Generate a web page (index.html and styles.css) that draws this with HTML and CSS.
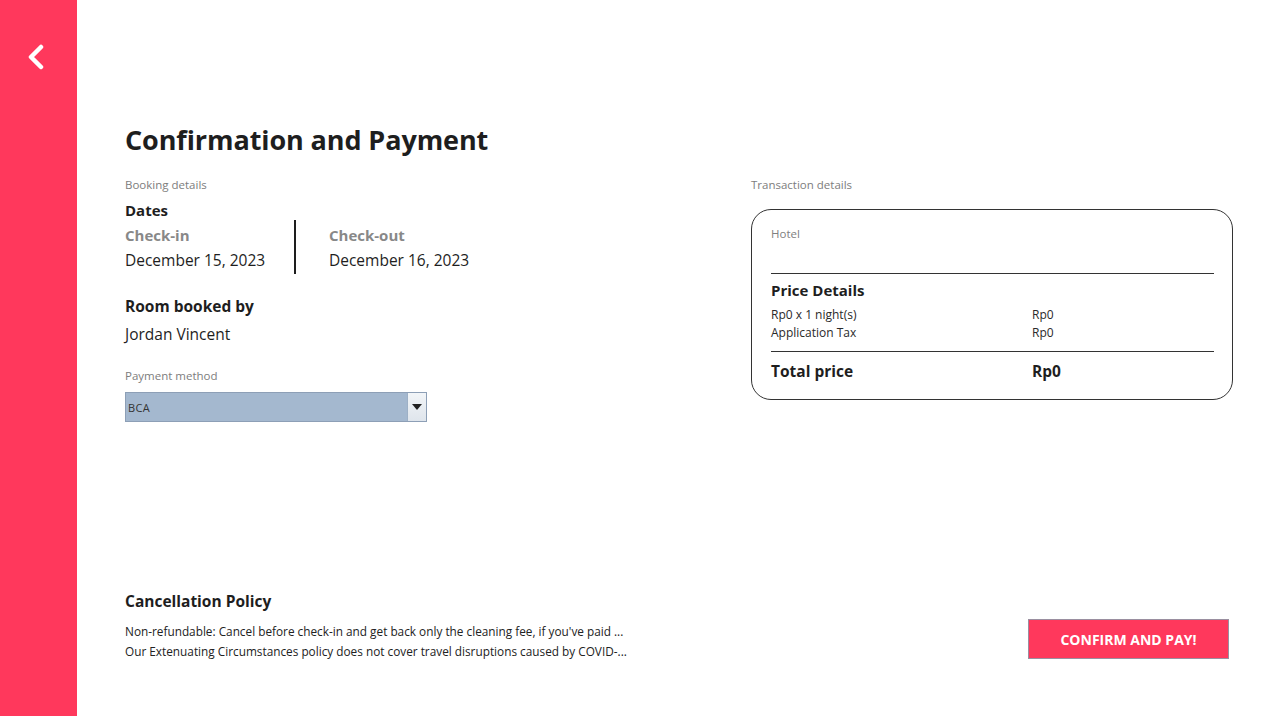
FILE: index.html
```html
<!DOCTYPE html>
<html>
<head>
<meta charset="utf-8">
<link rel="stylesheet" href="styles.css">
</head>
<body>
<div class="app">
  <aside class="sidebar">
    <svg class="back" width="20" height="26" viewBox="0 0 20 26"><path d="M15 3 L5 13 L15 23" fill="none" stroke="#fff" stroke-width="4.5" stroke-linecap="round" stroke-linejoin="round"/></svg>
  </aside>
  <main class="main">
    <h1 class="title">Confirmation and Payment</h1>
    <div class="columns">
      <section class="left">
        <div class="label">Booking details</div>
        <div class="h-dates">Dates</div>
        <div class="dates">
          <div class="date-col">
            <div class="date-head">Check-in</div>
            <div class="date-val">December 15, 2023</div>
          </div>
          <div class="divider"></div>
          <div class="date-col">
            <div class="date-head">Check-out</div>
            <div class="date-val">December 16, 2023</div>
          </div>
        </div>
        <div class="h-room">Room booked by</div>
        <div class="name">Jordan Vincent</div>
        <div class="label pm-label">Payment method</div>
        <div class="select">
          <span class="select-text">BCA</span>
          <span class="select-btn"><svg width="10" height="6" viewBox="0 0 10 6"><path d="M0 0 H10 L5 6 Z" fill="#222"/></svg></span>
        </div>
      </section>
      <section class="right">
        <div class="label">Transaction details</div>
        <div class="card">
          <div class="hotel">Hotel</div>
          <div class="rule"></div>
          <div class="pd-head">Price Details</div>
          <div class="row first"><span class="c1">Rp0 x 1 night(s)</span><span>Rp0</span></div>
          <div class="row"><span class="c1">Application Tax</span><span>Rp0</span></div>
          <div class="rule rule2"></div>
          <div class="row total"><span class="c1">Total price</span><span>Rp0</span></div>
        </div>
      </section>
    </div>
    <div class="footer">
      <div class="policy">
        <div class="h-policy">Cancellation Policy</div>
        <p class="ptext first">Non-refundable: Cancel before check-in and get back only the cleaning fee, if you've paid ...</p>
        <p class="ptext">Our Extenuating Circumstances policy does not cover travel disruptions caused by COVID-...</p>
      </div>
      <button class="confirm">CONFIRM AND PAY!</button>
    </div>
  </main>
</div>
</body>
</html>
```
FILE: styles.css
```css
* { box-sizing: border-box; }
html, body { margin: 0; padding: 0; background: #fff; }
body { font-family: "Open Sans", "Noto Sans", sans-serif; color: #1e1e1e; }
.app { display: flex; width: 1280px; height: 716px; }
.sidebar { width: 77px; background: #ff385c; flex: none; padding: 44px 0 0 26px; }
.back { display: block; }
.main { flex: 1; padding: 122px 48px 0 48px; display: flex; flex-direction: column; }
.title { margin: 0; font-size: 27px; font-weight: 700; line-height: 36px; color: #1e1e1e; letter-spacing: -0.1px; }
.columns { display: flex; margin-top: 20px; }
.left { width: 626px; flex: none; }
.right { flex: 1; }
.label { font-size: 11.5px; color: #7d7d7d; line-height: 14px; }
.h-dates { font-size: 15px; font-weight: 700; margin-top: 8px; line-height: 20px; }
.dates { display: flex; }
.date-col { width: 169px; }
.date-head { font-size: 15px; font-weight: 700; color: #888; line-height: 20px; margin-top: 5px; }
.date-val { font-size: 15.5px; line-height: 20px; margin-top: 5px; }
.divider { width: 2px; background: #1e1e1e; margin: 0 33px 0 0; height: 54px; }
.h-room { font-size: 15.5px; font-weight: 700; margin-top: 21px; line-height: 22px; }
.name { font-size: 15.5px; margin-top: 6px; line-height: 22px; }
.pm-label { margin-top: 24px; }
.select { width: 302px; height: 30px; margin-top: 9px; background: #a4b8cf; border: 1px solid #8d9fb6; display: flex; align-items: center; }
.select-text { flex: 1; font-size: 11px; padding-left: 2px; color: #333; letter-spacing: 0.3px; }
.select-btn { width: 19px; height: 28px; background: linear-gradient(#f2f5f8, #dfe5ec); border-left: 1px solid #9db0c6; display: flex; align-items: center; justify-content: center; }
.card { margin-top: 17px; width: 482px; height: 191px; border: 1px solid #333; border-radius: 20px; padding: 17px 18px 0 19px; }
.hotel { font-size: 11.5px; color: #808080; line-height: 14px; }
.rule { height: 1px; background: #333; margin-top: 32px; }
.pd-head { font-size: 15px; font-weight: 700; margin-top: 6px; line-height: 20px; }
.row { display: flex; font-size: 12px; line-height: 18px; color: #2a2a2a; }
.row.first { margin-top: 6px; }
.row .c1 { width: 261px; }
.rule2 { margin-top: 9px; }
.row.total { font-size: 15.5px; font-weight: 700; line-height: 22px; margin-top: 8px; color: #1e1e1e; }
.footer { margin-top: auto; margin-bottom: 55px; display: flex; justify-content: space-between; align-items: flex-end; }
.h-policy { font-size: 15.5px; font-weight: 700; line-height: 22px; }
.ptext { margin: 0; font-size: 11.8px; line-height: 20px; color: #222; }
.ptext.first { margin-top: 9px; }
.confirm { width: 201px; height: 40px; background: #ff385c; color: #fff; border: 1px solid #9a8fa0; font-family: "Open Sans", sans-serif; font-weight: 700; font-size: 14px; margin-right: 4px; margin-bottom: 2px; padding: 0; }
```
